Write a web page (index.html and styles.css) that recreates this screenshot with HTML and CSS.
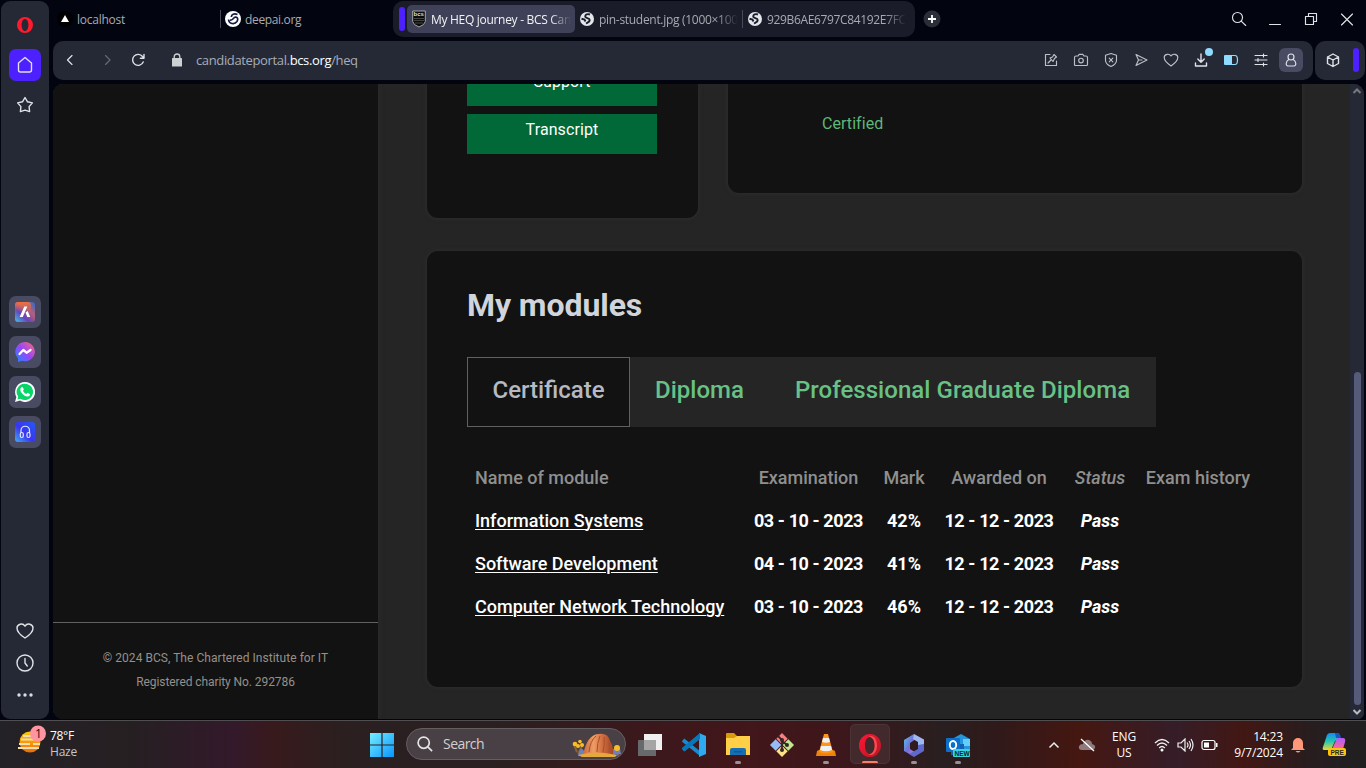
FILE: index.html
```html
<!DOCTYPE html>
<html lang="en">
<head>
<meta charset="utf-8">
<title>My HEQ journey - BCS Candidate Portal</title>
<link rel="stylesheet" href="styles.css">
</head>
<body>
<div class="browser">
  <aside class="sidebar">
    <div class="side-group">
      <span class="side-item"><svg width="18" height="18" viewBox="0 0 18 18"><path fill="#ff1b2d" fill-rule="evenodd" d="M9 1a8 8 0 1 0 0 16A8 8 0 0 0 9 1ZM9 3c2.100 0 3.400 2.700 3.400 6S11.100 15 9 15 5.600 12.300 5.600 9 6.900 3 9 3Z"/></svg></span>
      <span class="side-item side-home"><svg width="18" height="18" viewBox="0 0 18 18" class="line"><path d="M2.500 7 9 1.500 15.500 7v7a2 2 0 0 1-2 2h-9a2 2 0 0 1-2-2Z"/></svg></span>
      <span class="side-item"><svg width="18" height="18" viewBox="0 0 18 18" class="line"><path d="m9 1.500 2.500 4.300 4.900 1.100-3.300 3.700.5 5L9 14.100l-4.600 1.500.5-5L1.600 6.900l4.900-1.100Z"/></svg></span>
    </div>
    <div class="side-group side-apps">
      <span class="side-item app"><svg width="20" height="20" viewBox="0 0 20 20"><defs><linearGradient id="aria" x1="0" y1="1" x2="1" y2="0"><stop stop-color="#42c4e8"/><stop offset=".35" stop-color="#6544bd"/><stop offset=".65" stop-color="#b65f78"/><stop offset="1" stop-color="#266bd4"/></linearGradient><linearGradient id="ariatop" x1="0" y1="0" x2="0" y2="1"><stop stop-color="#f0703d"/><stop offset=".5" stop-color="#f0703d" stop-opacity="0"/></linearGradient></defs><rect width="20" height="20" rx="3" fill="url(#aria)"/><rect width="16" height="20" rx="3" fill="url(#ariatop)"/><path fill="#fff" d="M9.300 4.500h3L7.800 15H4.600ZM10.500 10.500l2.200-1.500L15.300 15h-3Z"/></svg></span>
      <span class="side-item app"><svg width="20" height="20" viewBox="0 0 20 20"><defs><linearGradient id="msg" x1="0" y1="1" x2="1" y2="0"><stop stop-color="#168bff"/><stop offset=".5" stop-color="#9a45fa"/><stop offset="1" stop-color="#ff6b70"/></linearGradient></defs><path fill="url(#msg)" d="M10 0a10 9.600 0 1 1-3 18.800L3 20v-3.500A9.800 9.800 0 0 1 10 0Z"/><path d="m4.500 12 3.800-4 3.300 2.700L15.500 8" fill="none" stroke="#fff" stroke-width="2.300" stroke-linejoin="round" stroke-linecap="round"/></svg></span>
      <span class="side-item app"><svg width="20" height="20" viewBox="0 0 20 20"><path fill="#fff" d="M10 0a10 10 0 1 1-5 18.600L0 20l1.400-5A10 10 0 0 1 10 0Z"/><path fill="#08d467" d="M10 1.700a8.200 8.200 0 1 1-4.600 15.100l-3 .8.800-2.900A8.200 8.200 0 0 1 10 1.700Z"/><path fill="#fff" d="M6.500 5.300c.7-.5 1.400-.2 1.600.4l.7 1.700c0 .5-.5.900-.9 1.400.8 1.500 1.900 2.600 3.400 3.200l1.200-1.300 2.400 1.200c.4.600-.2 2-1.200 2.400-2.300 1-5.300-1-7-3.200C5 9 4.700 6.700 6.500 5.300Z"/></svg></span>
      <span class="side-item app"><svg width="20" height="20" viewBox="0 0 20 20"><defs><linearGradient id="play" x1="0" y1="1" x2="1" y2="0"><stop stop-color="#3db0f5"/><stop offset=".45" stop-color="#3b35f0"/><stop offset="1" stop-color="#2459f5"/></linearGradient></defs><rect width="20" height="20" rx="3" fill="url(#play)"/><g fill="none" stroke="#e4e5ff" stroke-width="1.200"><path d="M6 11V8.500a4.200 4.200 0 0 1 8.500 0V11"/><rect x="5.300" y="10.500" width="3" height="5" rx="1.500"/><rect x="12" y="10.500" width="3" height="5" rx="1.500"/></g></svg></span>
    </div>
    <div class="side-group side-bottom">
      <svg width="18" height="18" viewBox="0 0 18 18" class="line"><path d="M9 16C5 13.500 1 10 1 6c0-3.500 5.500-5.800 8-1.800C11.500.2 17 2.500 17 6c0 4-4 7.500-8 10Z"/></svg>
      <svg width="18" height="18" viewBox="0 0 18 18" class="line"><circle cx="9" cy="9" r="8"/><path d="M9 4.500V9l2.300 3"/></svg>
      <svg width="18" height="18" viewBox="0 0 18 18" fill="#d9dce4"><circle cx="3" cy="9" r="1.700"/><circle cx="9" cy="9" r="1.700"/><circle cx="15" cy="9" r="1.700"/></svg>
    </div>
  </aside>

  <div class="window">
    <header class="tabs">
      <div class="tab tab-local"><svg width="16" height="16" viewBox="0 0 16 16"><circle cx="8" cy="8" r="8" fill="#000"/><path fill="#fff" d="m8 4 4 7H4Z"/></svg><span class="t-local">localhost</span></div>
      <div class="tab tab-deep"><svg width="16" height="16" viewBox="0 0 16 16"><circle cx="8" cy="8" r="8" fill="#fff"/><path d="M12.500 3.500C9 2 6.500 3.500 6.300 6M3.500 8.500c.5 4.500 6 5.500 8.500 2 1.500-2.500.5-4.500-1.500-4.300-2.500.3-2.500 3.300-5.500 3" fill="none" stroke="#171b42" stroke-width="1.700"/></svg><span class="t-deep">deepai.org</span></div>
      <div class="tab-island">
        <i class="island-mark"></i>
        <div class="tab tab-active"><svg width="14" height="18" viewBox="0 0 14 18"><path d="M.7 1h12.600v10.500q-.5 3.500-6.300 5.500Q1.200 15 .7 11.500Z" fill="#0c0c0e" stroke="#a7a7a7"/><path d="M2 8.500h10M2 10.500h10M3 13h8" stroke="#444"/><text x="1.500" y="6.300" class="bcs">bcs</text></svg><span class="fade t-heq">My HEQ journey - BCS Can</span></div>
        <div class="tab tab-pin"><svg class="globe" width="14" height="14" viewBox="0 0 14 14"><circle cx="7" cy="7" r="7" fill="#e4e6ea"/><path d="M10 2.500C7.500 1.500 5 2.500 5.200 4.600c.3 1.900 4.300 1 4.500 3.400.1 2-2.200 2.700-3.700 3.500M1.500 6.800l3 .7 1 2" fill="none" stroke="#1b1e2c" stroke-width="1.900"/></svg><span class="fade t-pin">pin-student.jpg (1000×100</span></div>
        <div class="tab tab-hash"><svg class="globe" width="14" height="14" viewBox="0 0 14 14"><circle cx="7" cy="7" r="7" fill="#e4e6ea"/><path d="M10 2.500C7.500 1.500 5 2.500 5.200 4.600c.3 1.900 4.300 1 4.500 3.400.1 2-2.200 2.700-3.700 3.500M1.500 6.800l3 .7 1 2" fill="none" stroke="#1b1e2c" stroke-width="1.900"/></svg><span class="fade t-hash">929B6AE6797C84192E7FC</span></div>
      </div>
      <span class="new-tab"><svg width="18" height="18" viewBox="0 0 18 18"><circle cx="9" cy="9" r="8.500" fill="#2b2d38"/><path d="M9 5v8M5 9h8" stroke="#fff" stroke-width="1.800"/></svg></span>
      <div class="win-controls">
        <svg width="16" height="16" viewBox="0 0 16 16" class="line thin"><circle cx="6.500" cy="6.500" r="5"/><path d="m10.200 10.200 4.500 4.300"/></svg>
        <svg width="16" height="16" viewBox="0 0 16 16" class="line thin"><path d="M2.500 13.500h11"/></svg>
        <svg width="16" height="16" viewBox="0 0 16 16" class="line thin"><path d="M2.500 5.500h8v8h-8ZM5.500 5.500v-3h8v8h-3"/></svg>
        <svg width="16" height="16" viewBox="0 0 16 16" class="line thin"><path d="m2.500 3 11 11M13.500 3l-11 11"/></svg>
      </div>
    </header>

    <div class="toolbar">
      <div class="address">
        <svg width="16" height="16" viewBox="0 0 16 16" class="line thin back"><path d="m10 3.500-4.500 4.500 4.500 4.500"/></svg>
        <svg width="16" height="16" viewBox="0 0 16 16" class="line thin forward"><path d="m5.500 3.500 4.500 4.500-4.500 4.500"/></svg>
        <svg width="16" height="16" viewBox="0 0 16 16" class="line reload"><path d="M13.200 10A5.500 5.500 0 1 1 12.500 4.500L14 6.200M14 2.500v3.700h-3.600"/></svg>
        <svg width="12" height="14" viewBox="0 0 12 14" class="lock"><rect x="1" y="5" width="10" height="8.500" rx=".6" fill="#cdd1d1"/><path d="M3.200 6V3.800a2.800 2.800 0 0 1 5.600 0V6" fill="none" stroke="#cdd1d1" stroke-width="1.300"/></svg>
        <span class="url">candidateportal.<b>bcs.org</b>/heq</span>
        <div class="tools">
          <svg width="16" height="16" viewBox="0 0 16 16" class="line thin dim"><path d="M7 2.500H2.500v11h11V9M5 11l3-3M7 6l3 3.500 1.500-3 2-1.500L11 2.500 9.500 5Z"/></svg>
          <svg width="16" height="16" viewBox="0 0 16 16" class="line thin dim"><path d="M1.500 5.500q0-1.500 1.500-1.500h2l1.200-1.700h3.600L11 4h2q1.500 0 1.500 1.500v7q0 1-1 1h-11q-1 0-1-1Z"/><circle cx="8" cy="8.500" r="2.300"/></svg>
          <svg width="16" height="16" viewBox="0 0 16 16" class="line thin dim"><path d="m8 1.500 5.500 1.700v5c0 3-2.500 5-5.500 6.300-3-1.300-5.500-3.300-5.500-6.300v-5ZM6.200 6.200l3.600 3.600M9.800 6.200 6.200 9.800"/></svg>
          <svg width="16" height="16" viewBox="0 0 16 16" class="line thin dim"><path d="m3 2.500 11 5.500-11 5.500L5.500 8ZM5.500 8H9"/></svg>
          <svg width="16" height="16" viewBox="0 0 16 16" class="line thin dim"><path d="M8 14C4.500 11.500 1.200 9 1.200 5.500c0-3.300 5-4.600 6.800-1.500 1.800-3.100 6.800-1.800 6.800 1.500C14.800 9 11.500 11.500 8 14Z"/></svg>
          <span class="download"><svg width="16" height="16" viewBox="0 0 16 16" class="line"><path d="M8 2v8M4.800 7 8 10.200 11.200 7M2.500 11v3h11v-3"/></svg><i class="dot"></i></span>
          <svg width="16" height="16" viewBox="0 0 16 16"><path d="M8 3.500h4q2.500 0 2.500 4.500t-2.500 4.500H8" fill="none" stroke="#90d9ff" stroke-width="1.200"/><rect x="1" y="3" width="8" height="10" rx="1" fill="#90d9ff"/></svg>
          <svg width="16" height="16" viewBox="0 0 16 16" class="line thin"><path d="M2 3.500h12M2 8h12M2 12.500h12M10.500 2v3M5 6.500v3M10.500 11v3"/></svg>
          <span class="profile"><svg width="16" height="16" viewBox="0 0 16 16" class="line thin"><circle cx="8" cy="5" r="3"/><path d="M5.700 7.500C2.500 9.500 2.500 14 5 14h6c2.500 0 2.500-4.500-.7-6.500"/></svg></span>
        </div>
      </div>
      <div class="extra"><svg width="16" height="16" viewBox="0 0 16 16" class="line"><path d="m8 2 5.500 3v6.500L8 14.500l-5.500-3V5ZM2.500 5 8 8l5.500-3M8 8v6.500"/></svg><i class="extra-mark"></i></div>
    </div>

    <div class="page">
      <aside class="page-nav">
        <footer class="page-footer"><p class="f-one">© 2024 BCS, The Chartered Institute for IT</p><p class="f-two">Registered charity No. 292786</p></footer>
      </aside>
      <main class="content">
        <section class="top-cards">
          <div class="card links-card"><a class="button b-support"><span>Support</span></a><a class="button b-transcript"><span>Transcript</span></a></div>
          <div class="card status-card"><span class="certified">Certified</span></div>
        </section>
        <section class="card modules">
          <h1><span>My modules</span></h1>
          <nav class="levels"><a class="level current"><span class="l-cert">Certificate</span></a><a class="level level-dip"><span class="l-dip">Diploma</span></a><a class="level level-pgd"><span class="l-pgd">Professional Graduate Diploma</span></a></nav>
          <table>
            <colgroup><col class="c-name"><col class="c-exam"><col class="c-mark"><col class="c-award"><col class="c-status"><col class="c-history"></colgroup>
            <thead><tr><th><span class="h-name">Name of module</span></th><th><span class="h-exam">Examination</span></th><th><span class="h-mark">Mark</span></th><th><span class="h-award">Awarded on</span></th><th><em>Status</em></th><th><span class="h-history">Exam history</span></th></tr></thead>
            <tbody>
              <tr><td><a class="m-info">Information Systems</a></td><td class="date">03 - 10 - 2023</td><td>42%</td><td class="date">12 - 12 - 2023</td><td><em>Pass</em></td><td></td></tr>
              <tr><td><a class="m-soft">Software Development</a></td><td class="date">04 - 10 - 2023</td><td>41%</td><td class="date">12 - 12 - 2023</td><td><em>Pass</em></td><td></td></tr>
              <tr><td><a class="m-net">Computer Network Technology</a></td><td class="date">03 - 10 - 2023</td><td>46%</td><td class="date">12 - 12 - 2023</td><td><em>Pass</em></td><td></td></tr>
            </tbody>
          </table>
        </section>
      </main>
      <div class="scrollbar"><svg width="10" height="6" viewBox="0 0 10 6"><path d="m1.500 5 3.500-3.500L8.500 5" fill="none" stroke="#77797d" stroke-width="2"/></svg><i class="thumb"></i><svg width="10" height="6" viewBox="0 0 10 6"><path d="M1.500 1 5 4.500 8.500 1" fill="none" stroke="#b8bac0" stroke-width="2"/></svg></div>
    </div>
  </div>
</div>

<footer class="taskbar">
  <div class="weather">
    <svg width="28" height="30" viewBox="0 0 28 30"><defs><linearGradient id="sun" x1="0" y1="0" x2="0" y2="1"><stop stop-color="#ffca05"/><stop offset="1" stop-color="#ef6b07"/></linearGradient></defs><circle cx="12" cy="17" r="10.500" fill="url(#sun)"/><path d="M5 11h10M3 14.500h13M18 14.500h6M1 19h11M15 19h7M0 23h21" stroke="#f2deb2" stroke-width="2"/><circle cx="20" cy="8.500" r="8" fill="#ff95a0"/><text x="17" y="13" class="badge">1</text></svg>
    <div class="weather-text"><span class="w-temp">78°F</span><span class="w-haze">Haze</span></div>
  </div>
  <div class="apps">
    <svg class="start" width="24" height="24" viewBox="0 0 24 24"><defs><linearGradient id="win" x1="0" y1="0" x2="1" y2="1"><stop stop-color="#75edff"/><stop offset="1" stop-color="#0895ff"/></linearGradient></defs><path fill="url(#win)" d="M0 0h11.400v11.400H0ZM12.600 0H24v11.400H12.600ZM0 12.600h11.400V24H0ZM12.600 12.600H24V24H12.600Z"/></svg>
    <div class="search">
      <svg width="16" height="16" viewBox="0 0 16 16" fill="none" stroke="#e4e3e5" stroke-width="1.700"><circle cx="6.700" cy="6.700" r="5.600"/><path d="m10.800 10.800 4.300 4.300"/></svg>
      <span>Search</span>
      <svg class="hill" width="50" height="26" viewBox="0 0 50 26"><defs><linearGradient id="rock" x1="0" y1="0" x2="1" y2="0"><stop stop-color="#c86a3b"/><stop offset=".35" stop-color="#f09c66"/><stop offset=".65" stop-color="#ce6c3e"/><stop offset="1" stop-color="#a54728"/></linearGradient></defs><path d="M5 20 2 13M6 22l5-10M46 24l-2-8" stroke="#8a6234" stroke-width="2"/><path fill="#6f7fc6" d="M7 20q2-6 5-1v5H6ZM39 17h9l1 5-8 1Z"/><path fill="url(#rock)" d="M11 23Q15 3 26 2q10-2 12 7 4 6 3 14Z"/><path d="M17 20q1-11 7-16M25 20q0-9 3-16M31 20q2-8 1-15M37 20q1-6 0-10" stroke="#a84f2c" stroke-width="1" fill="none"/><path fill="#e7a83b" d="M6 23q17-5 39 0l-2 2H10Z"/><g fill="#f9bd28"><circle cx="3" cy="12" r="2.300"/><circle cx="8" cy="9.500" r="1.800"/><circle cx="10" cy="13" r="2"/><circle cx="6" cy="14" r="2"/><circle cx="45" cy="16" r="3"/></g></svg>
    </div>
    <div class="app-icon"><svg width="26" height="26" viewBox="0 0 26 26"><rect x="7" y="2" width="18" height="16" fill="#f0f0f0"/><rect x="1" y="8" width="18" height="16" rx=".5" fill="#67696a"/><path fill="#a5a5a5" d="M7 8h12v10H7Z"/></svg></div>
    <div class="app-icon"><svg width="26" height="26" viewBox="0 0 26 26"><path d="m2 8 17.500 14M2 18 19.500 4" stroke="#168bd2" stroke-width="3.800"/><path fill="#2eaaf0" d="M18 1 25 4v18l-7 3Z"/><path fill="#0877ba" d="m1 16 3 3L19 7V1Z"/></svg></div>
    <div class="app-icon running"><svg width="26" height="26" viewBox="0 0 26 26"><path fill="#d89b0c" d="M1 2q0-1 1-1h7l3 3h13v6H1Z"/><path fill="#ffcf48" d="M1 6h8l3-2h13v19H1Z"/><path fill="#176eb3" d="M5 23v-5q0-2 2-2h12q2 0 2 2v5Z"/><path fill="#0f5b98" d="M9 19h8v1.500H9Z"/></svg></div>
    <div class="app-icon"><svg width="26" height="26" viewBox="0 0 26 26"><g transform="translate(13 13) rotate(45)"><path fill="#f58082" d="M-8.500-8.500h8v8h-8Z"/><path fill="#c2e88f" d="M.5-8.500h8v8h-8Z"/><path fill="#94bdf8" d="M-8.500.5h8v8h-8Z"/><path fill="#fbe384" d="M.5.500h8v8h-8Z"/></g><path d="m9 4 4 4v10M13 9l5 4" fill="none" stroke="#352526" stroke-width="1.800"/><g fill="#352526"><circle cx="13" cy="8" r="2"/><circle cx="13" cy="18" r="2"/><circle cx="18" cy="13" r="2"/></g></svg></div>
    <div class="app-icon running"><svg width="26" height="26" viewBox="0 0 26 26"><path fill="#f18208" d="m6 18-2 1-1 5h20l-1-5-2-1Z"/><path fill="#ff9418" d="M11 2h4l5 18q-7 3-14 0Z"/><path fill="#f0f1f2" d="m10 6-1 4q4 1.500 8 0l-1-4ZM8 14l-1 4q6 2.500 12 0l-1-4Z"/></svg></div>
    <div class="app-icon running selected"><svg width="26" height="26" viewBox="0 0 26 26"><defs><linearGradient id="op" x1="0" y1="0" x2="1" y2="1"><stop stop-color="#ff1738"/><stop offset="1" stop-color="#b71621"/></linearGradient></defs><path fill="url(#op)" fill-rule="evenodd" d="M13 2a11 11.500 0 1 0 0 23A11 11.500 0 0 0 13 2ZM13 5c3.300 0 4.700 4 4.700 8.500S16.300 22 13 22s-5-4-5-8.500S9.700 5 13 5Z"/><path fill="#f64d51" d="M11 5c5-3 9 2 9 8.500S16 25 11 22c3.500 1 6.700-3 6.700-8.500S14.500 4 11 5Z"/></svg></div>
    <div class="app-icon running"><svg width="26" height="26" viewBox="0 0 26 26"><defs><linearGradient id="m365" x1="0" y1="0" x2="1" y2="1"><stop stop-color="#52cae9"/><stop offset=".5" stop-color="#756dd9"/><stop offset="1" stop-color="#cc8be5"/></linearGradient></defs><path fill="url(#m365)" d="m3 8 10-6 2 5-6 4v6l6 4-2 3.500L3 19Z"/><path fill="#9fb8f2" d="m13 2 10 5.500V16l-6-3v-3l-5-3Z"/><path fill="#5f68cb" d="M23 12v7l-10 6-5-3 9-5v-4Z"/></svg></div>
    <div class="app-icon running"><svg width="26" height="26" viewBox="0 0 26 26"><path fill="#2495df" d="m7 7 9-5 9 5v15H7Z"/><path fill="#62cef9" d="M18 7h7v7h-7Z"/><path fill="#1261b5" d="M6 12h13v11H6Z"/><rect x="1" y="6" width="14" height="14" rx="1" fill="#0b70cb"/><ellipse cx="8" cy="13" rx="3.200" ry="4" fill="none" stroke="#fff" stroke-width="1.900"/><rect x="8" y="17" width="17" height="8" rx="1" fill="#38d5d7"/><text x="9.500" y="23.700" class="new">NEW</text></svg></div>
  </div>
  <div class="tray">
    <svg class="caret" width="12" height="8" viewBox="0 0 12 8"><path d="m1.500 6.500 4.500-4.500 4.500 4.500" fill="none" stroke="#eee" stroke-width="1.500"/></svg>
    <svg class="cloud" width="18" height="14" viewBox="0 0 18 14"><path fill="#8e797c" d="M4 12Q0 12 1 8q1-2 4-2 2-5 6-4 3 1 3 4 4 1 3 4-1 2-3 2Z"/><path d="m3 1 13 12" stroke="#fff" stroke-width="1.300"/></svg>
    <div class="lang"><span>ENG</span><span>US</span></div>
    <svg class="wifi" width="16" height="14" viewBox="0 0 16 14"><g fill="none" stroke="#eee" stroke-width="1.300"><path d="M1 5q7-7 14 0M3 7.500q5-5 10 0M5.200 10q2.800-3 5.600 0"/></g><circle cx="8" cy="12" r="1.500" fill="#fff"/></svg>
    <svg class="volume" width="17" height="14" viewBox="0 0 17 14"><path d="M1 5h3l4-4v12L4 9H1ZM10 4.500q2 2.500 0 5M12 3q3 4 0 8M14 1q4 6 0 12" fill="none" stroke="#eee" stroke-width="1.200"/></svg>
    <svg class="battery" width="17" height="12" viewBox="0 0 17 12"><rect x="1" y="1.500" width="13" height="9" rx="2" fill="none" stroke="#fff" stroke-width="1.200"/><path fill="#fff" d="M3 3.500h5v5H3ZM15 4h1.500v4H15Z"/></svg>
    <div class="clock"><span>14:23</span><span class="today">9/7/2024</span></div>
    <svg class="bell" width="14" height="16" viewBox="0 0 14 16"><path fill="#ff9878" d="M2 11V6a5 5 0 0 1 10 0v5l2 2H0ZM4.500 14h5q-2.500 3-5 0Z"/></svg>
    <svg class="copilot" width="26" height="26" viewBox="0 0 26 26"><defs><linearGradient id="co" x1="0" y1="0" x2="0" y2="1"><stop stop-color="#168af0"/><stop offset=".5" stop-color="#23c8ae"/><stop offset="1" stop-color="#f0d53c"/></linearGradient><linearGradient id="cp" x1="0" y1="0" x2="0" y2="1"><stop stop-color="#ae5cff"/><stop offset="1" stop-color="#ff6892"/></linearGradient></defs><path fill="url(#co)" d="M6 3q1-2 3-2h8l2 5-5 3-4 9H3q-2 0-1-3Z"/><path fill="#1459bb" d="M14 1h3q2 0 3 5h-5Z"/><path fill="url(#cp)" d="M16 6h6q3 0 2 4l-2 7H11Z"/><rect x="7" y="16" width="18" height="8" rx="2" fill="#ffc50b"/><text x="9.500" y="22.800" class="pre">PRE</text></svg>
  </div>
</footer>
</body>
</html>
```
FILE: styles.css
```css
* { box-sizing: border-box; }
body { margin: 0; width: 1366px; height: 768px; overflow: hidden; background: #020410; font-family: "Open Sans", "Noto Sans", sans-serif; color: #fff; display: flex; flex-direction: column; }
svg { display: block; flex: none; }
i { display: block; }
.browser { height: 720px; display: flex; padding: 1px 1px 0; gap: 4px; flex: none; }
.line { fill: none; stroke: #e0e2e7; stroke-width: 1.4; stroke-linejoin: round; stroke-linecap: round; }
.thin { stroke-width: 1.15; }
.dim { stroke: #bcbfc6; }

.sidebar { width: 48px; height: 718px; background: #252935; border-radius: 9px; display: flex; flex-direction: column; align-items: center; padding: 8px 0 15px; }
.side-group { display: flex; flex-direction: column; gap: 8px; align-items: center; }
.side-item { width: 32px; height: 32px; display: flex; align-items: center; justify-content: center; border-radius: 7px; }
.side-home { background: #4d20ff; }
.app { background: #484b61; }
.side-apps { margin-top: 175px; }
.side-bottom { margin-top: auto; gap: 14px; padding-right: 1px; }

.window { flex: 1; min-width: 0; display: flex; flex-direction: column; }
.tabs { height: 40px; display: flex; align-items: flex-start; }
.tab { display: flex; align-items: center; height: 28px; font-size: 12px; color: #a9aab1; white-space: nowrap; flex: none; }
.tab-local { width: 163px; margin: 4px 0 0 4px; gap: 4px; }
.tab-deep { width: 173px; margin-top: 4px; gap: 4px; position: relative; padding-left: 5px; }
.tab-deep::before, .tab-hash::before { content: ""; position: absolute; left: -1px; top: 5px; width: 1px; height: 18px; background: #464956; }
.tab-deep::before { left: 0; }
.t-local { letter-spacing: -.25px; }
.t-deep { letter-spacing: -.35px; }
.tab-island { width: 522px; height: 36px; background: #1a1c2a; border-radius: 10px; display: flex; align-items: center; padding-left: 6px; flex: none; }
.island-mark { width: 6px; height: 24px; border-radius: 3px; background: #4d20ff; margin-right: 2px; }
.tab-active { width: 168px; background: #3e4158; border-radius: 5px; color: #f3f3f5; padding: 0 4px 0 5px; gap: 5px; }
.tab-pin { width: 168px; padding-left: 5px; gap: 5px; }
.tab-hash { width: 172px; gap: 5px; padding: 0 8px 0 5px; position: relative; }
.fade { -webkit-mask-image: linear-gradient(90deg, #000 85%, transparent); mask-image: linear-gradient(90deg, #000 85%, transparent); }
.t-heq { letter-spacing: -.3px; }
.t-pin { letter-spacing: -.3px; }
.t-hash { letter-spacing: -.35px; }
.bcs { font: bold 6px "Liberation Sans", sans-serif; fill: #ddd; }
.new-tab { margin: 9px 0 0 8px; }
.win-controls { margin: 10px 10px 0 auto; display: flex; gap: 20px; }

.toolbar { height: 39px; display: flex; gap: 2px; }
.address { width: 1260px; background: #252935; border-radius: 10px; display: flex; align-items: center; padding: 0 0 1px 9px; }
.back { margin-right: 22px; }
.forward { opacity: .35; margin-right: 14px; }
.reload { margin-right: 25px; }
.lock { margin-right: 13px; }
.url { font-size: 13px; letter-spacing: -.36px; color: #a8acb7; }
.url b { font-weight: 400; color: #fff; }
.tools { margin: 0 10px 0 auto; display: flex; align-items: center; gap: 14px; }
.download { position: relative; }
.dot { position: absolute; width: 8px; height: 8px; border-radius: 50%; background: #90d9ff; right: -4px; top: -4px; }
.profile { width: 24px; height: 24px; margin-left: -4px; border-radius: 6px; background: #484b62; display: grid; place-items: center; }
.extra { width: 50px; background: #252935; border-radius: 10px; display: flex; align-items: center; padding: 0 0 1px 10px; gap: 12px; }
.extra-mark { width: 6px; height: 24px; border-radius: 3px; background: #4d20ff; }

.page { margin-top: 4px; width: 1311px; height: 635px; display: flex; background: #252525; border-radius: 10px 10px 6px 10px; overflow: hidden; font-family: Roboto, "Liberation Sans", sans-serif; }
.page-nav { width: 325px; background: #121212; display: flex; align-items: flex-end; box-shadow: 0 0 5px #303030; }
.page-footer { width: 325px; height: 97px; border-top: 1px solid #626262; padding-top: 23px; text-align: center; color: #969089; font-size: 12px; line-height: 24px; }
.page-footer p { margin: 0; }
.f-one { letter-spacing: .04px; }
.f-two { letter-spacing: -.08px; }
.content { width: 972px; padding: 0 48px 0 49px; }
.top-cards { display: flex; gap: 30px; height: 167px; align-items: flex-start; }
.card { background: #121212; border-radius: 11px; box-shadow: 0 0 5px #303030; }
.links-card { width: 271px; height: 134px; border-radius: 0 0 11px 11px; padding: 0 41px 0 40px; }
.status-card { width: 574px; height: 109px; border-radius: 0 0 11px 11px; padding: 28px 0 0 94px; }
.certified { display: block; font-size: 16px; line-height: 24px; color: #5fb878; letter-spacing: .05px; }
.button { display: block; background: #006937; text-align: center; font-size: 16px; line-height: 24px; }
.b-support { height: 22px; overflow: hidden; }
.b-support span { display: block; margin-top: -14px; letter-spacing: .1px; }
.b-transcript { height: 40px; margin-top: 8px; padding-top: 4px; letter-spacing: .1px; }
.modules { width: 875px; height: 436px; padding: 32px 0 0 40px; }
h1 { margin: 0; font-size: 32px; line-height: 44px; font-weight: 700; color: #d1d5db; letter-spacing: -.08px; }
.levels { margin-top: 30px; height: 70px; width: 689px; background: #252525; display: flex; font-size: 24px; line-height: 32px; font-weight: 500; color: #68c285; white-space: nowrap; }
.level { display: block; padding-top: 17px; text-align: center; }
.current { width: 163px; border: 1px solid #606060; background: #121212; color: #b5bac3; padding-top: 16px; }
.level-dip { width: 139px; }
.level-pgd { width: 387px; letter-spacing: .05px; }
table { margin-top: 29px; width: 793px; table-layout: fixed; border-collapse: collapse; font-size: 18px; white-space: nowrap; }
tr { height: 43px; }
th, td { padding: 0; text-align: center; line-height: 24px; }
th { font-weight: 500; color: #8f8f8f; }
td { font-weight: 700; }
th:first-child, td:first-child { text-align: left; padding-left: 8px; }
td a { text-decoration: underline; text-underline-offset: 2px; text-decoration-thickness: 1px; text-decoration-skip-ink: auto; font-weight: 500; }
.date { letter-spacing: -.4px; }
.c-name { width: 276px; } .c-exam { width: 131px; } .c-mark { width: 60px; } .c-award { width: 130px; } .c-status { width: 72px; } .c-history { width: 124px; }
.scrollbar { width: 14px; background: #252936; display: flex; flex-direction: column; align-items: center; padding: 4px 0; }
.thumb { width: 7px; height: 333px; margin: auto 0 4px; background: #555b78; border-radius: 4px; }

.taskbar { height: 48px; flex: none; border-top: 1px solid #514e52; display: flex; position: relative; background: linear-gradient(90deg, #232226, #261f22 10%, #33192b 17%, #381a1c 20%, #2b1f20 25%, #2a2021 36%, #3b181c 47%, #42161a 55%, #3c171b 62%, #291f20 69%, #30191a 73%, #451711 79%, #351d28 86%, #421713 91%, #271d1f 96%, #202021); font-size: 12px; line-height: 16px; }
.weather { width: 370px; display: flex; padding: 4px 0 0 18px; gap: 4px; }
.weather-text { display: flex; flex-direction: column; padding-top: 3px; }
.w-temp { letter-spacing: -.3px; }
.w-haze { color: #c7c5c7; letter-spacing: -.2px; }
.badge { font: 12px "Open Sans", sans-serif; fill: #111; }
.apps { display: flex; }
.start { margin: 12px 12px 0 0; }
.search { width: 220px; height: 32px; margin: 7px 4px 0 0; border-radius: 16px; background: #484044; border: 1px solid #655e61; display: flex; align-items: center; padding-left: 10px; font-size: 14px; color: #d3cfd1; gap: 10px; }
.search span { letter-spacing: -.55px; }
.hill { margin: 2px 3px 0 auto; }
.app-icon { width: 40px; height: 40px; margin: 3px 4px 0 0; padding-top: 8px; display: flex; flex-direction: column; align-items: center; border-radius: 5px; gap: 3px; }
.app-icon.running::after { content: ""; width: 6px; height: 3px; border-radius: 2px; background: #999092; flex: none; }
.selected { background: #41292c; outline: 1px solid #4b3437; outline-offset: -1px; }
.app-icon.selected::after { width: 16px; background: #fa7e66; }
.new { font: bold 6.500px "Liberation Sans", sans-serif; fill: #06252a; }
.pre { font: bold 6.500px "Liberation Sans", sans-serif; fill: #2b2a22; }
.tray { margin-left: auto; display: flex; padding-right: 19px; }
.caret { margin: 20px 18px 0 0; }
.cloud { margin: 17px 15px 0 0; }
.lang, .clock { display: flex; flex-direction: column; margin-top: 8px; }
.lang { width: 26px; align-items: center; margin-right: 17px; letter-spacing: -.2px; }
.wifi { margin: 17px 7px 0 0; }
.volume { margin: 17px 7px 0 0; }
.battery { margin: 18px 14px 0 0; }
.clock { width: 51px; align-items: flex-end; letter-spacing: -.15px; margin-right: 8px; }
.bell { margin: 16px 16px 0 0; }
.copilot { margin: 11px 0 0; }
```
